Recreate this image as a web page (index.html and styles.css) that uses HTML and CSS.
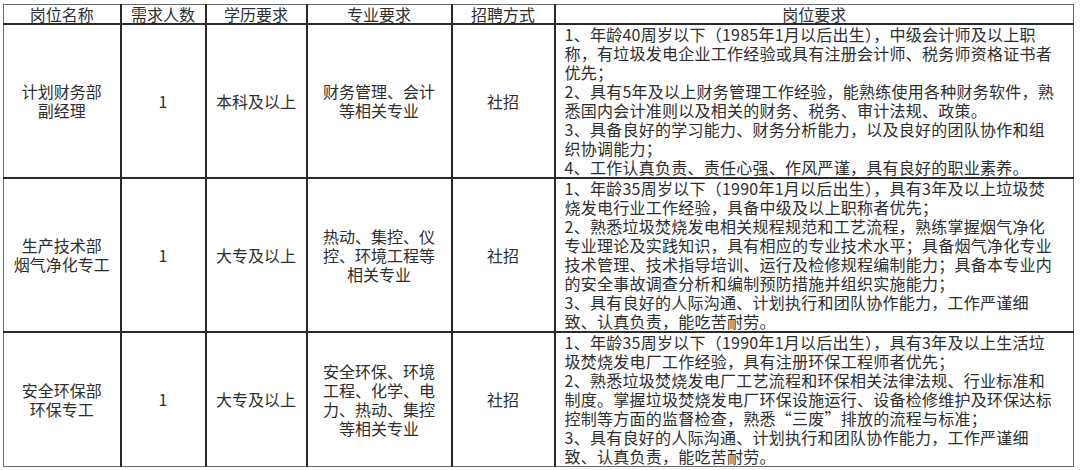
FILE: index.html
```html
<!DOCTYPE html>
<html lang="zh-CN">
<head>
<meta charset="utf-8">
<title>招聘岗位</title>
<link rel="stylesheet" href="styles.css">
</head>
<body>
<table class="jobs">
  <colgroup>
    <col class="c-name">
    <col class="c-num">
    <col class="c-edu">
    <col class="c-major">
    <col class="c-way">
    <col class="c-req">
  </colgroup>
  <thead>
    <tr class="head">
      <th>岗位名称</th>
      <th>需求人数</th>
      <th>学历要求</th>
      <th>专业要求</th>
      <th>招聘方式</th>
      <th>岗位要求</th>
    </tr>
  </thead>
  <tbody>
    <tr class="r8">
      <td><div class="ln">计划财务部</div><div class="ln">副经理</div></td>
      <td>1</td>
      <td>本科及以上</td>
      <td><div class="ln">财务管理、会计</div><div class="ln">等相关专业</div></td>
      <td>社招</td>
      <td class="req">
        <div class="ln">1、年龄40周岁以下（1985年1月以后出生），中级会计师及以上职</div>
        <div class="ln">称，有垃圾发电企业工作经验或具有注册会计师、税务师资格证书者</div>
        <div class="ln">优先；</div>
        <div class="ln">2、具有5年及以上财务管理工作经验，能熟练使用各种财务软件，熟</div>
        <div class="ln">悉国内会计准则以及相关的财务、税务、审计法规、政策。</div>
        <div class="ln">3、具备良好的学习能力、财务分析能力，以及良好的团队协作和组</div>
        <div class="ln">织协调能力；</div>
        <div class="ln">4、工作认真负责、责任心强、作风严谨，具有良好的职业素养。</div>
      </td>
    </tr>
    <tr class="r8">
      <td><div class="ln">生产技术部</div><div class="ln">烟气净化专工</div></td>
      <td>1</td>
      <td>大专及以上</td>
      <td><div class="ln">热动、集控、仪</div><div class="ln">控、环境工程等</div><div class="ln">相关专业</div></td>
      <td>社招</td>
      <td class="req">
        <div class="ln">1、年龄35周岁以下（1990年1月以后出生），具有3年及以上垃圾焚</div>
        <div class="ln">烧发电行业工作经验，具备中级及以上职称者优先；</div>
        <div class="ln">2、熟悉垃圾焚烧发电相关规程规范和工艺流程，熟练掌握烟气净化</div>
        <div class="ln">专业理论及实践知识，具有相应的专业技术水平；具备烟气净化专业</div>
        <div class="ln">技术管理、技术指导培训、运行及检修规程编制能力；具备本专业内</div>
        <div class="ln">的安全事故调查分析和编制预防措施并组织实施能力；</div>
        <div class="ln">3、具有良好的人际沟通、计划执行和团队协作能力，工作严谨细</div>
        <div class="ln">致、认真负责，能吃苦耐劳。</div>
      </td>
    </tr>
    <tr class="r7">
      <td><div class="ln">安全环保部</div><div class="ln">环保专工</div></td>
      <td>1</td>
      <td>大专及以上</td>
      <td><div class="ln">安全环保、环境</div><div class="ln">工程、化学、电</div><div class="ln">力、热动、集控</div><div class="ln">等相关专业</div></td>
      <td>社招</td>
      <td class="req">
        <div class="ln">1、年龄35周岁以下（1990年1月以后出生），具有3年及以上生活垃</div>
        <div class="ln">圾焚烧发电厂工作经验，具有注册环保工程师者优先；</div>
        <div class="ln">2、熟悉垃圾焚烧发电厂工艺流程和环保相关法律法规、行业标准和</div>
        <div class="ln">制度。掌握垃圾焚烧发电厂环保设施运行、设备检修维护及环保达标</div>
        <div class="ln">控制等方面的监督检查，熟悉“三废”排放的流程与标准；</div>
        <div class="ln">3、具有良好的人际沟通、计划执行和团队协作能力，工作严谨细</div>
        <div class="ln">致、认真负责，能吃苦耐劳。</div>
      </td>
    </tr>
  </tbody>
</table>
</body>
</html>
```
FILE: styles.css
```css
html, body {
  margin: 0;
  padding: 0;
  background: #ffffff;
}

body {
  padding: 4px 0 0 3px;
  font-family: "Noto Sans CJK SC", "Noto Sans", sans-serif;
  font-size: 16px;
  color: #2e2e2e;
}

.jobs {
  border-collapse: collapse;
  table-layout: fixed;
  width: 1070px;
  border: 1px solid #6a6a6a;
}

.c-name { width: 117px; }
.c-num { width: 85px; }
.c-edu { width: 101px; }
.c-major { width: 145px; }
.c-way { width: 103px; }
.c-req { width: 519px; }

.jobs th,
.jobs td {
  border-left: 2px solid #2a2a2a;
  border-top: 2px solid #2a2a2a;
  padding: 0;
  text-align: center;
  vertical-align: middle;
  font-weight: 400;
  line-height: 19px;
  white-space: nowrap;
}

.jobs th:first-child,
.jobs td:first-child {
  border-left: 1px solid #6a6a6a;
}

.jobs thead th {
  border-top: 1px solid #6a6a6a;
}

.head th {
  height: 18px;
  line-height: 18px;
}

.ln {
  height: 19px;
  line-height: 19px;
}

.r8 td { height: 152px; }
.r7 td { height: 131px; }

.jobs td.req {
  text-align: left;
  padding: 0 4px 0 9px;
  letter-spacing: 0.25px;
}
```
